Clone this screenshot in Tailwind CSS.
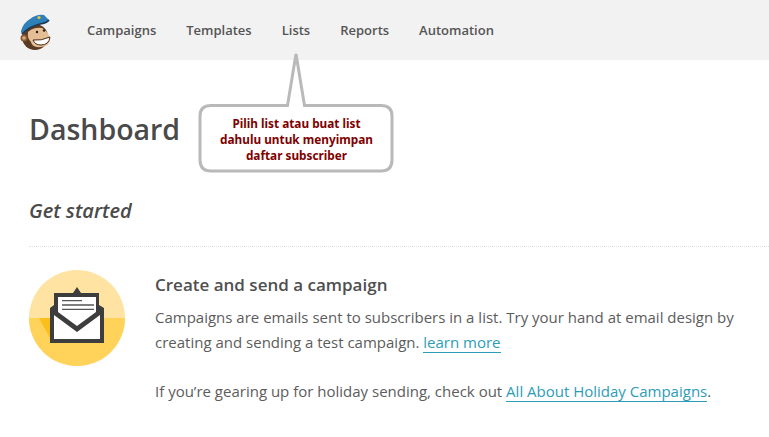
<!DOCTYPE html>
<html lang="en">
<head>
    <meta charset="UTF-8">
    <title>Dashboard</title>
    <script src="https://cdn.jsdelivr.net/npm/@tailwindcss/browser@4"></script>
</head>
<body class="relative w-[769px] h-[437px] overflow-hidden bg-white font-['Open_Sans',sans-serif] text-[#5c5c5c]">
    <!-- Top nav -->
    <nav class="h-[60px] bg-[#f2f2f2] flex items-center pl-[18px]">
        <svg class="w-[34px] h-[38px] mr-[35px] mt-[4px]" viewBox="0 0 34 38">
            <ellipse cx="17" cy="24" rx="13" ry="13" fill="#5b3a22"/>
            <circle cx="6" cy="25" r="3.500" fill="#8a5a35"/>
            <circle cx="6" cy="25" r="1.800" fill="#d9ab7c"/>
            <path d="M10 19 Q16 14 24 15 Q31 19 32 26 Q32 33 23 34 Q14 35 13 29 Q9 25 10 19Z" fill="#e4bf95"/>
            <path d="M3 18 Q5 10 12 6 Q19 1 26 2 L31 7 Q30 9 22 11 Q12 13 5 21 Q3 21 3 18Z" fill="#2f7fb8"/>
            <path d="M4 21 Q12 13 22 11 Q29 10 31 7" fill="none" stroke="#1b3a55" stroke-width="1.600"/>
            <circle cx="21" cy="4.500" r="1.600" fill="#e6c638"/>
            <circle cx="19" cy="19" r="1.200" fill="#2b1a10"/>
            <circle cx="26" cy="17.500" r="1.200" fill="#2b1a10"/>
            <path d="M15 27 Q23 28 32 24 Q31 32 23 32 Q17 32 15 27Z" fill="#fff" stroke="#4a2c17" stroke-width="1"/>
        </svg>
        <div class="flex gap-[30px] text-[13px] font-semibold text-[#555] pt-[1px]">
            <a>Campaigns</a>
            <a>Templates</a>
            <a>Lists</a>
            <a>Reports</a>
            <a>Automation</a>
        </div>
    </nav>

    <main class="pl-[29px]">
        <h1 class="mt-[47px] text-[28.500px] leading-[44px] font-semibold text-[#4a4a4a]">Dashboard</h1>
        <h2 class="mt-[46px] text-[20px] leading-[28px] font-semibold italic text-[#4a4a4a]">Get started</h2>
        <div class="mt-[21px] border-t border-dotted border-[#e0e0e0]"></div>

        <section class="mt-[23px] flex gap-[30px]">
            <svg class="w-[96px] h-[96px] shrink-0" viewBox="0 0 96 96">
                <circle cx="48" cy="48" r="48" fill="#ffe3a3"/>
                <path d="M0 48 H96 A48 48 0 0 1 0 48Z" fill="#ffd359"/>
                <path d="M10 48 H21 V68 Z" fill="#fbbf1c"/>
                <path d="M21 38 L25 35 V23 H44 L48 17 L52 23 H70 V35 L75 38 V73 H21Z" fill="#3d3d3d"/>
                <path d="M29 27 H67 V42 L48 56 L29 42Z" fill="#fff"/>
                <path d="M33 30.700 H53 M33 35 H65 M33 39.300 H65" stroke="#555" stroke-width="1.300"/>
                <path d="M25 45 L48 62 L71 45 V69 H25Z" fill="#fff"/>
            </svg>
            <div class="pt-[1px] w-[600px]">
                <h3 class="text-[17px] leading-[27px] font-semibold text-[#4f4f4f]">Create and send a campaign</h3>
                <p class="mt-[7px] text-[15px] leading-[25px]">Campaigns are emails sent to subscribers in a list. Try your hand at email design by creating and sending a test campaign. <a class="text-[#2d9cb8] border-b border-[#2d9cb8]">learn more</a></p>
                <p class="mt-[24px] text-[15px] leading-[25px]">If you’re gearing up for holiday sending, check out <a class="text-[#2d9cb8] border-b border-[#2d9cb8]">All About Holiday Campaigns</a>.</p>
            </div>
        </section>
    </main>

    <!-- Callout over the page -->
    <div class="absolute left-[198px] top-[49px] w-[197px] h-[125px]">
        <svg class="absolute inset-0" width="197" height="125" viewBox="0 0 197 125">
            <path d="M89.500 56.500 L98 5 L106.500 56.500 H183 Q194 56.500 194 67 V111 Q194 122 183 122 H13 Q2 122 2 111 V67 Q2 56.500 13 56.500Z" fill="#fff" stroke="#b9b9b9" stroke-width="3"/>
        </svg>
        <p class="absolute left-0 right-0 top-[66px] text-center font-['Noto_Sans',sans-serif] font-bold text-[11.800px] leading-[16px] text-[#800000]">Pilih list atau buat list<br>dahulu untuk menyimpan<br>daftar subscriber</p>
    </div>
</body>
</html>
